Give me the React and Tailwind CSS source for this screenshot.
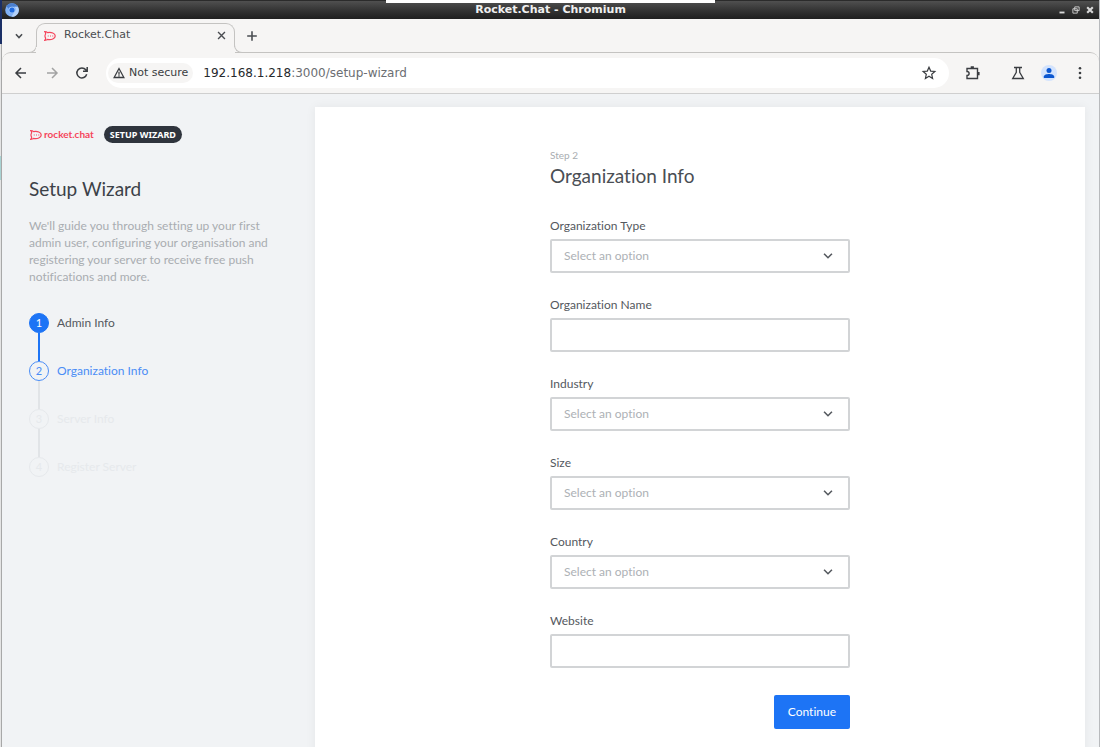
const STEPS = ["Admin Info", "Organization Info", "Server Info", "Register Server"];

const FIELDS = [
  { id: "organizationType", label: "Organization Type", type: "select" },
  { id: "organizationName", label: "Organization Name", type: "text" },
  { id: "industry", label: "Industry", type: "select" },
  { id: "size", label: "Size", type: "select" },
  { id: "country", label: "Country", type: "select" },
  { id: "website", label: "Website", type: "text" }
];

function Icon({ children, className = "", width = 1.5, size = 16 }) {
  return (
    <svg
      width={size}
      height={size}
      viewBox="0 0 16 16"
      fill="none"
      stroke="currentColor"
      strokeWidth={width}
      className={`shrink-0 ${className}`}
      aria-hidden="true"
    >
      {children}
    </svg>
  );
}

function RocketMark({ className = "", size = 12 }) {
  return (
    <Icon size={size} width={1.6} className={`text-[#f5455c] ${className}`}>
      <path d="M1 2.200c1.700 0 2.900.5 3.800 1.300C9.700 2.300 15 4.600 15 8s-5.300 5.700-10.200 4.500C3.900 13.300 2.700 13.800 1 13.800c.9-1 1.300-2.100 1.100-3.200-1-1.600-1-3.600 0-5.200C2.300 4.300 1.900 3.200 1 2.200z" />
      <path d="M5 8h1.300M8 8h1.300M11 8h1.300" />
    </Icon>
  );
}

function TitleBar() {
  return (
    <header className="relative flex h-[19px] shrink-0 items-center justify-center border-t border-[#2b2b2b] bg-linear-to-b from-[#505050] via-[#353535] via-50% to-[#1f1f1f]">
      <div className="absolute top-[-1px] left-[35%] flex h-[3px] w-[30%] bg-white" />
      <svg width="14" height="14" viewBox="0 0 14 14" className="absolute left-[3px]" aria-hidden="true">
        <circle cx="7" cy="7" r="6.800" fill="#7fb0f5" />
        <path d="M7 .2a6.800 6.800 0 0 1 6 3.600H7a3.200 3.200 0 0 0-3 2.200L1.300 3.300A6.800 6.800 0 0 1 7 .2z" fill="#4a7fd0" />
        <path d="M13 3.800a6.800 6.800 0 0 1-6.500 10l3-5.300a3.200 3.200 0 0 0 0-4.700z" fill="#b4d2fb" />
        <circle cx="7" cy="7" r="3.300" fill="#a9cbfa" />
        <circle cx="7" cy="7" r="2.600" fill="#1f6be0" />
      </svg>
      <h1 className="text-[11px] leading-4 font-bold text-[#f0f0f0]">Rocket.Chat - Chromium</h1>
      <div className="absolute right-1 flex items-center gap-1 text-[#d8d8d8]">
        <button type="button" aria-label="Minimize">
          <Icon size={10} width={3}><path d="M4 12h8" /></Icon>
        </button>
        <button type="button" aria-label="Restore">
          <Icon size={10} width={1.4}><path d="M6 3h7v6H6zM3 6h7v7H3z" /></Icon>
        </button>
        <button type="button" aria-label="Close window">
          <Icon size={10} width={3.4}><path d="M3.500 3.500l9 9M12.500 3.500l-9 9" /></Icon>
        </button>
      </div>
    </header>
  );
}

function TabStrip() {
  return (
    <div className="flex h-[33px] shrink-0 items-end text-[#4a4d51]">
      <button type="button" aria-label="Search tabs" className="flex h-full w-[27px] items-center justify-end pr-[3px]">
        <Icon size={14} width={1.8}><path d="M4.500 6l3.500 3.700L11.500 6" /></Icon>
      </button>
      <div className="relative z-10 -mb-px flex items-end">
        <span className="-mr-px size-2 rounded-br-[8px] border-r border-b border-[#c4c3c1] bg-[#f6f5f4]" />
        <div className="w-[199px] bg-[#f6f5f4]">
          <div className="flex h-[24px] items-center rounded-t-[9px] border border-b-0 border-[#c4c3c1] px-[7px]">
            <RocketMark size={12} />
            <span className="ml-2 grow text-[11px]">Rocket.Chat</span>
            <button type="button" aria-label="Close tab">
              <Icon size={11} width={2}><path d="M3 3l10 10M13 3L3 13" /></Icon>
            </button>
          </div>
          <div className="h-[6px]" />
        </div>
        <span className="-ml-px size-2 rounded-bl-[8px] border-b border-l border-[#c4c3c1] bg-[#f6f5f4]" />
      </div>
      <button type="button" aria-label="New tab" className="flex h-full items-center px-[3px]">
        <Icon size={14} width={1.8}><path d="M8 2.500v11M2.500 8h11" /></Icon>
      </button>
    </div>
  );
}

function Toolbar() {
  return (
    <div className="flex h-[42px] shrink-0 items-center rounded-t-[9px] border-t border-b border-[#c4c3c1] border-b-[#cfcfcf] px-[11px] text-[#3a3d41]">
      <button type="button" aria-label="Back" className="mr-[15px]">
        <Icon><path d="M13 8H3M8 3L3 8l5 5" /></Icon>
      </button>
      <button type="button" aria-label="Forward" className="mr-[14px] text-[#a3a3a3]">
        <Icon><path d="M3 8h10M8 3l5 5-5 5" /></Icon>
      </button>
      <button type="button" aria-label="Reload" className="mr-4">
        <Icon width={1.500}><path d="M12.700 9.300A5 5 0 1 1 11.800 4.800L13 6.200M13.200 2v4.300H9" /></Icon>
      </button>
      <div className="flex h-[30px] grow items-center rounded-full bg-white pr-3 pl-[2px]">
        <button type="button" className="flex h-5 items-center gap-1 rounded-full bg-[#f6f5f4] px-[5px] text-[11px]">
          <Icon size={12} width={1.700}><path d="M8 2L1.500 14h13zM8 6.300v4M8 11v1.600" /></Icon>
          Not secure
        </button>
        <span className="ml-[10px] grow text-[12px] text-[#6b6e72]">
          <span className="text-[#26292c]">192.168.1.218</span>:3000/setup-wizard
        </span>
        <button type="button" aria-label="Bookmark this tab">
          <Icon width={1.200}><path d="M8 2.200l1.700 3.900 4.200.4-3.200 2.800.9 4.200L8 11.300l-3.600 2.200.9-4.200L2.100 6.500l4.200-.4z" /></Icon>
        </button>
      </div>
      <button type="button" aria-label="Extensions" className="ml-4">
        <Icon width={1.400}>
          <path d="M2 3.500h10.500v10H2v-3c1.400 0 2.100-.8 2.100-2s-.7-2-2.100-2z" />
          <path d="M5.700 2.300h3.200M13.600 7v3.200" strokeWidth="2" />
        </Icon>
      </button>
      <button type="button" aria-label="Experiments" className="ml-[29px]">
        <Icon width={1.300}><path d="M4 2.500h8M6.300 2.500v4.800L2.700 13.500h10.600L9.700 7.300V2.500" /></Icon>
      </button>
      <button type="button" aria-label="Profile" className="ml-[15px] flex size-4 items-center justify-center rounded-full bg-[#d3e3fd] text-[#0b57d0]">
        <svg width="12" height="12" viewBox="0 0 12 12" fill="currentColor" aria-hidden="true">
          <circle cx="6" cy="3.400" r="2.500" />
          <path d="M.8 11V9.600C.8 7.800 4 7 6 7s5.200.8 5.200 2.600V11z" />
        </svg>
      </button>
      <button type="button" aria-label="Menu" className="ml-[15px]">
        <svg width="16" height="16" viewBox="0 0 16 16" fill="currentColor" aria-hidden="true">
          <circle cx="8" cy="3.300" r="1.300" />
          <circle cx="8" cy="8" r="1.300" />
          <circle cx="8" cy="12.700" r="1.300" />
        </svg>
      </button>
    </div>
  );
}

function Stepper({ current }) {
  return (
    <ol className="mt-[28px] text-[12px]">
      {STEPS.map((step, index) => {
        const number = index + 1;
        const done = number < current;
        const active = number === current;
        const circle = done
          ? "border-[#1d74f5] bg-[#1d74f5] text-white"
          : active
            ? "border-[#4a8df6] text-[#4a8df6]"
            : "border-[#e6e9ec] text-[#e6e9ec]";
        const text = done ? "text-[#54585e]" : active ? "text-[#4a8df6]" : "text-[#e6e9ec]";
        return (
          <li key={step} className="flex flex-col">
            <div className="flex items-center gap-2">
              <span className={`flex size-5 items-center justify-center rounded-full border text-[11px] ${circle}`}>{number}</span>
              <span className={text}>{step}</span>
            </div>
            {number < STEPS.length && (
              <span className={`ml-[9px] h-7 w-[2px] ${done ? "bg-[#1d74f5]" : "bg-[#e1e4e7]"}`} />
            )}
          </li>
        );
      })}
    </ol>
  );
}

function Sidebar() {
  return (
    <aside className="w-[313px] shrink-0 px-[27px] pt-8 font-['Lato','Noto_Sans',sans-serif]">
      <div className="flex items-center gap-[10px]">
        <div className="flex items-center gap-[2px] pl-[1px] text-[10px] font-bold text-[#f5455c]">
          <RocketMark />
          rocket.chat
        </div>
        <span className="rounded-full bg-[#2f343d] px-[6px] font-['Noto_Sans',sans-serif] text-[9px] leading-[17px] font-bold text-white">
          SETUP WIZARD
        </span>
      </div>
      <h2 className="mt-8 text-[19px] leading-7 text-[#3c4148]">Setup Wizard</h2>
      <p className="mt-[14px] text-[12px] leading-[17px] text-[#a9adb1]">
        We'll guide you through setting up your first admin user, configuring your organisation and registering
        your server to receive free push notifications and more.
      </p>
      <Stepper current={2} />
    </aside>
  );
}

function Field({ id, label, type }) {
  const box = "block h-[34px] w-full rounded-[2px] border-2 border-[#d2d4d6] bg-white px-3 text-[12px]";
  return (
    <div>
      <label htmlFor={id} className="mb-1 block text-[12px] leading-[18px] text-[#54585e]">{label}</label>
      {type === "select" ? (
        <div className="relative">
          <select id={id} defaultValue="" className={`${box} appearance-none text-[#adb1b5]`}>
            <option value="">Select an option</option>
          </select>
          <Icon width={1.8} size={14} className="pointer-events-none absolute top-[10px] right-[15px] text-[#54585e]">
            <path d="M3.500 5.500L8 10l4.500-4.500" />
          </Icon>
        </div>
      ) : (
        <input id={id} type="text" className={`${box} text-[#54585e]`} />
      )}
    </div>
  );
}

function OrganizationForm() {
  return (
    <main className="mt-[13px] mr-[14px] grow bg-white pt-[41px] pb-12 font-['Lato','Noto_Sans',sans-serif] shadow-[0_0_10px_rgba(0,0,0,0.06)]">
      <form className="mx-auto max-w-[300px]">
        <p className="text-[10px] leading-[14px] text-[#a9adb1]">Step 2</p>
        <h2 className="text-[19px] leading-7 text-[#4a4e54]">Organization Info</h2>
        <div className="mt-[27px] flex flex-col gap-[23px]">
          {FIELDS.map((field) => (
            <Field key={field.id} {...field} />
          ))}
        </div>
        <div className="mt-[27px] flex justify-end">
          <button type="button" className="h-[34px] rounded-[2px] bg-[#1d74f5] px-[14px] text-[12px] text-white">Continue</button>
        </div>
      </form>
    </main>
  );
}

export default function App() {
  return (
    <div className="flex h-screen overflow-hidden bg-[#1b2f66] font-['DejaVu_Sans',sans-serif] [font-variant-ligatures:none]">
      <div className="flex w-[2px] shrink-0 flex-col">
        <div className="h-11" />
        <div className="h-28 border-r border-[#a8a8a8] bg-[#e4e4e4]" />
        <div className="h-6 border-r border-[#a8a8a8] bg-[#a9d3d3]" />
        <div className="grow border-r border-[#a8a8a8] bg-[#e4e4e4]" />
      </div>
      <div className="flex min-w-0 grow flex-col border-r border-[#b8babd] bg-[#f6f5f4]">
        <TitleBar />
        <TabStrip />
        <Toolbar />
        <div className="flex grow bg-[#f1f3f5]">
          <Sidebar />
          <OrganizationForm />
        </div>
      </div>
    </div>
  );
}
